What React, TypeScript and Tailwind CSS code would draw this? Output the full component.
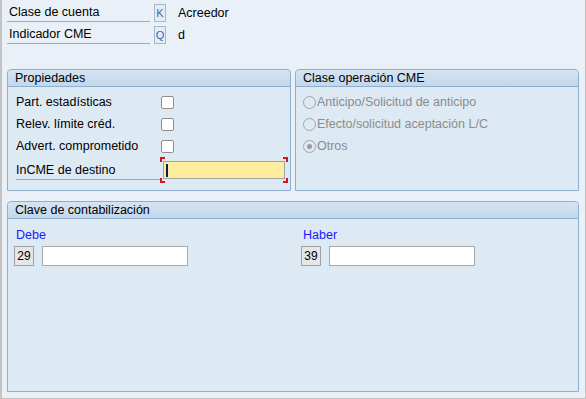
import React from 'react';

const font = { fontFamily: '"Liberation Sans", Arial, sans-serif' };

const Checkbox = () => (
  <div className="w-[13px] h-[13px] bg-white border border-[#8f8f8f] rounded-[2px]" />
);

const Radio = ({ checked }: { checked?: boolean }) => (
  <div className="w-[13px] h-[13px] rounded-full border border-[#a5a5a5] flex items-center justify-center shrink-0">
    {checked && <div className="w-[5px] h-[5px] rounded-full bg-[#9a9a9a]" />}
  </div>
);

const GroupHeader = ({ title }: { title: string }) => (
  <div className="h-[17px] bg-gradient-to-b from-[#d5e4f2] to-[#c3d7eb] border-b border-[#8eafce] rounded-t-[4px] px-[7px] flex items-center text-[12.5px] text-black leading-none">
    {title}
  </div>
);

const KeyBox = ({ k }: { k: string }) => (
  <div className="w-[12px] h-[18px] border border-[#a9b8c8] bg-[#e4ecf5] flex items-center justify-center text-[11px] text-[#2a6fb0]">
    {k}
  </div>
);

export default function App() {
  return (
    <div style={font} className="w-[586px] h-[399px] bg-[#eaf0f7] border-l-[2px] border-r-[1px] border-b-[1px] border-[#c3c3c3] overflow-hidden text-[12.5px] text-black">
      <div className="pl-[5px] pt-[4px] flex flex-col gap-[4px]">
        <div className="flex items-center h-[18px]">
          <div className="w-[143px] h-[18px] border-b border-[#a8a8a8] pl-[2px] flex items-center">Clase de cuenta</div>
          <div className="ml-[4px]"><KeyBox k="K" /></div>
          <div className="ml-[12px]">Acreedor</div>
        </div>
        <div className="flex items-center h-[18px]">
          <div className="w-[143px] h-[18px] border-b border-[#a8a8a8] pl-[2px] flex items-center">Indicador CME</div>
          <div className="ml-[4px]"><KeyBox k="Q" /></div>
          <div className="ml-[12px]">d</div>
        </div>
      </div>

      <div className="mt-[25px] ml-[5px] mr-[6px] flex gap-[4px]">
        <div className="w-[284px] h-[122px] border border-[#8eafce] rounded-t-[4px] bg-[#dde9f3] flex flex-col">
          <GroupHeader title="Propiedades" />
          <div className="pl-[8px] pt-[7px] flex flex-col gap-[6px]">
            {['Part. estadísticas', 'Relev. límite créd.', 'Advert. comprometido'].map((t) => (
              <div key={t} className="flex items-center h-[16px]">
                <div className="w-[145px]">{t}</div>
                <Checkbox />
              </div>
            ))}
            <div className="flex items-end h-[20px]">
              <div className="w-[146px] h-[18px] border-b border-[#a8a8a8] flex items-center">InCME de destino</div>
              <div className="relative w-[124px] h-[20px]">
                <div className="absolute inset-[1px] bg-[#ffed9e] border border-[#a3a3a3] flex items-center pl-[2px]">
                  <div className="w-[2px] h-[13px] bg-[#0a1b5c]" />
                </div>
                <div className="absolute -left-[2px] -top-[3px] w-[5px] h-[5px] border-l-2 border-t-2 border-[#d9141c]" />
                <div className="absolute -right-[2px] -top-[3px] w-[5px] h-[5px] border-r-2 border-t-2 border-[#d9141c]" />
                <div className="absolute -left-[2px] -bottom-[3px] w-[5px] h-[5px] border-l-2 border-b-2 border-[#d9141c]" />
                <div className="absolute -right-[2px] -bottom-[3px] w-[5px] h-[5px] border-r-2 border-b-2 border-[#d9141c]" />
              </div>
            </div>
          </div>
        </div>

        <div className="flex-1 h-[122px] border border-[#8eafce] rounded-t-[4px] bg-[#dde9f3] flex flex-col">
          <GroupHeader title="Clase operación CME" />
          <div className="pl-[7px] pt-[7px] flex flex-col gap-[6px] text-[#8c8c8c]">
            <div className="flex items-center gap-[1px] h-[16px]"><Radio />Anticipo/Solicitud de anticipo</div>
            <div className="flex items-center gap-[1px] h-[16px]"><Radio />Efecto/solicitud aceptación L/C</div>
            <div className="flex items-center gap-[1px] h-[16px]"><Radio checked />Otros</div>
          </div>
        </div>
      </div>

      <div className="mt-[10px] ml-[5px] mr-[6px] h-[191px] border border-[#8eafce] rounded-t-[4px] bg-[#dde9f3] flex flex-col">
        <GroupHeader title="Clave de contabilización" />
        <div className="pl-[6px] pt-[7px] flex">
          {[
            { label: 'Debe', code: '29' },
            { label: 'Haber', code: '39' },
          ].map((c) => (
            <div key={c.label} className="w-[287px] shrink-0 flex flex-col">
              <div className="pl-[2px] h-[16px] text-[#1a1aff]">{c.label}</div>
              <div className="mt-[4px] flex items-center gap-[8px]">
                <div className="w-[20px] h-[20px] border border-[#a0a0a0] bg-[#e6e6e6] flex items-center justify-center text-[12px]">{c.code}</div>
                <div className="w-[146px] h-[20px] bg-white border border-[#a9a9a9]" />
              </div>
            </div>
          ))}
        </div>
      </div>
    </div>
  );
}
